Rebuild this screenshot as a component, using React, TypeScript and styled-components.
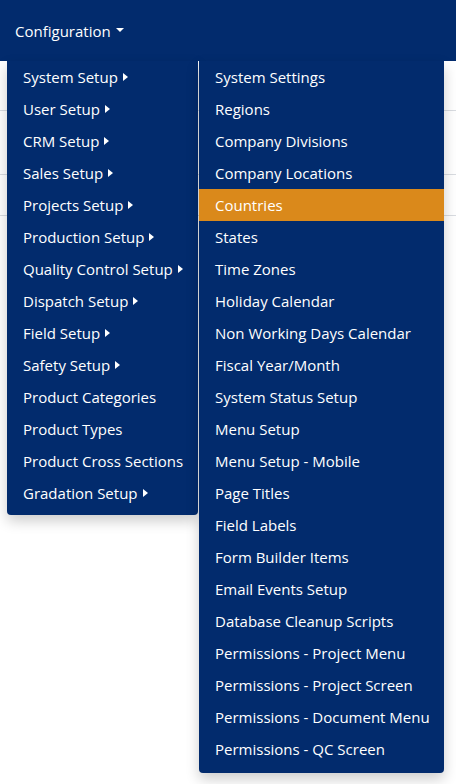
import React from "react";
import styled, { createGlobalStyle } from "styled-components";

const NAVY = "#022b6d";
const ORANGE = "#da891b";

const GlobalStyle = createGlobalStyle`
  html, body {
    margin: 0;
    padding: 0;
    background: #ffffff;
    font-family: "Open Sans", "Noto Sans", "Liberation Sans", sans-serif;
    font-size: 15px;
  }
  * { box-sizing: border-box; }
`;

const Shell = styled.div`
  position: relative;
  width: 456px;
  height: 784px;
  overflow: hidden;
  background: #ffffff;
`;

const Navbar = styled.nav`
  height: 61px;
  background: ${NAVY};
  display: flex;
  align-items: center;
  padding-left: 15px;
`;

const NavToggle = styled.div`
  display: flex;
  align-items: center;
  color: #ffffff;
  font-size: 15px;
  line-height: 20px;
  position: relative;
`;

const CaretDown = styled.span`
  width: 0;
  height: 0;
  margin-left: 5px;
  margin-bottom: 2px;
  border-top: 4.5px solid #ffffff;
  border-left: 4.5px solid transparent;
  border-right: 4.5px solid transparent;
`;

const Content = styled.div`
  display: flex;
  flex-direction: column;
`;

const Row = styled.div<{ $h: number }>`
  height: ${(p) => p.$h}px;
  border-bottom: 1px solid #d9dce1;
`;

const Menu = styled.ul`
  position: absolute;
  top: 61px;
  left: 7px;
  width: 191px;
  margin: 0;
  padding: 0 0 6px;
  list-style: none;
  background: ${NAVY};
  border-radius: 0 0 4px 4px;
  box-shadow: 0 6px 14px rgba(0, 0, 0, 0.2);
  z-index: 10;
`;

const SubMenu = styled.ul`
  position: absolute;
  top: 0;
  left: 192px;
  width: 245px;
  margin: 0;
  padding: 0 0 8px;
  list-style: none;
  background: ${NAVY};
  border-radius: 0 0 4px 4px;
  box-shadow: 0 6px 14px rgba(0, 0, 0, 0.2);
  z-index: 20;
`;

const Item = styled.li<{ $active?: boolean }>`
  height: 32px;
  display: flex;
  align-items: center;
  padding-left: 16px;
  color: #ffffff;
  font-size: 15px;
  line-height: 30px;
  padding-bottom: 1px;
  white-space: nowrap;
  background: ${(p) => (p.$active ? ORANGE : "transparent")};
`;

const ParentItem = styled(Item)`
  position: relative;
`;

const CaretRight = styled.span`
  width: 0;
  height: 0;
  margin-left: 5px;
  border-left: 5px solid #ffffff;
  border-top: 4.5px solid transparent;
  border-bottom: 4.5px solid transparent;
`;

const leftItems: { label: string; sub: boolean }[] = [
  { label: "System Setup", sub: true },
  { label: "User Setup", sub: true },
  { label: "CRM Setup", sub: true },
  { label: "Sales Setup", sub: true },
  { label: "Projects Setup", sub: true },
  { label: "Production Setup", sub: true },
  { label: "Quality Control Setup", sub: true },
  { label: "Dispatch Setup", sub: true },
  { label: "Field Setup", sub: true },
  { label: "Safety Setup", sub: true },
  { label: "Product Categories", sub: false },
  { label: "Product Types", sub: false },
  { label: "Product Cross Sections", sub: false },
  { label: "Gradation Setup", sub: true },
];

const subItems = [
  "System Settings",
  "Regions",
  "Company Divisions",
  "Company Locations",
  "Countries",
  "States",
  "Time Zones",
  "Holiday Calendar",
  "Non Working Days Calendar",
  "Fiscal Year/Month",
  "System Status Setup",
  "Menu Setup",
  "Menu Setup - Mobile",
  "Page Titles",
  "Field Labels",
  "Form Builder Items",
  "Email Events Setup",
  "Database Cleanup Scripts",
  "Permissions - Project Menu",
  "Permissions - Project Screen",
  "Permissions - Document Menu",
  "Permissions - QC Screen",
];

export default function App() {
  return (
    <Shell>
      <GlobalStyle />
      <Navbar>
        <NavToggle>
          Configuration
          <CaretDown />
        </NavToggle>
      </Navbar>
      <Content>
        <Row $h={50} />
        <Row $h={64} />
        <Row $h={41} />
      </Content>
      <Menu>
        {leftItems.map((it, i) =>
          i === 0 ? (
            <ParentItem key={it.label}>
              {it.label}
              <CaretRight />
              <SubMenu>
                {subItems.map((s) => (
                  <Item key={s} $active={s === "Countries"}>
                    {s}
                  </Item>
                ))}
              </SubMenu>
            </ParentItem>
          ) : (
            <Item key={it.label}>
              {it.label}
              {it.sub && <CaretRight />}
            </Item>
          )
        )}
      </Menu>
    </Shell>
  );
}
